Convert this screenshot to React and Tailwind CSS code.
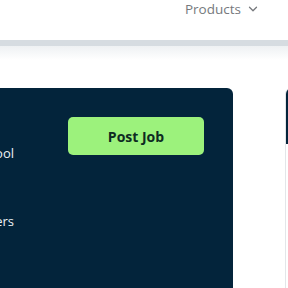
import { ChevronDown } from "lucide-react";

export default function App() {
  return (
    <div className="h-[288px] w-[288px] overflow-hidden bg-white font-['Open_Sans',sans-serif]">
      <header className="flex h-[40px] items-start justify-end bg-white pr-[28px]">
        <button className="-mt-[1px] flex items-center gap-[5px] text-[13.5px] text-[#76797d]">
          Products
          <ChevronDown className="h-[14px] w-[14px]" strokeWidth={2.2} />
        </button>
      </header>
      <div className="h-[6px] bg-[#d6dce1]" />
      <div className="h-[14px] bg-gradient-to-b from-[#eef1f3] to-white" />

      <main className="flex gap-[52px] pt-[28px]">
        <section className="flex h-[220px] w-[233px] shrink-0 justify-between rounded-tr-[6px] bg-[#03243b] pt-[29px] pr-[29px]">
          <div className="-ml-[86px] flex w-[100px] flex-col items-end gap-[48px] pt-[27px] text-[13px] text-[#eef2f5]">
            <span>School</span>
            <span>Teachers</span>
          </div>
          <button className="h-[38px] w-[136px] rounded-[5px] bg-[#9cf27c] text-[14px] font-bold text-[#0e2b22]">
            Post Job
          </button>
        </section>
        <aside className="h-[220px] w-[200px] shrink-0 rounded-tl-[6px] border-l border-[#e3e6e9]">
          <div className="h-[56px] rounded-tl-[6px] bg-[#03243b]" />
        </aside>
      </main>
    </div>
  );
}
